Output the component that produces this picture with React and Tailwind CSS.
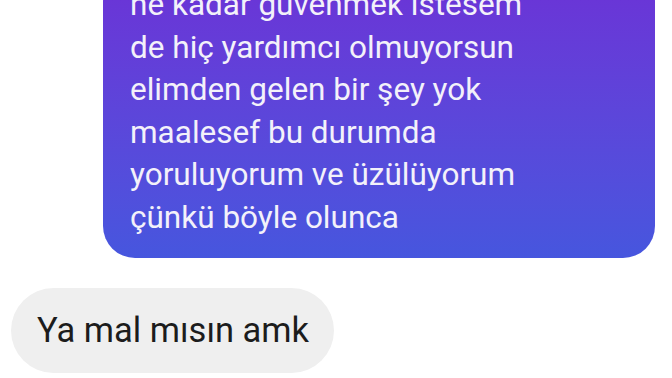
import React from 'react';

const lines = [
  'ne kadar güvenmek istesem',
  'de hiç yardımcı olmuyorsun',
  'elimden gelen bir şey yok',
  'maalesef bu durumda',
  'yoruluyorum ve üzülüyorum',
  'çünkü böyle olunca',
];

const App = () => {
  return (
    <div
      className="w-[672px] h-[378px] overflow-hidden bg-white flex flex-col"
      style={{ fontFamily: 'Roboto, "Noto Sans", sans-serif' }}
    >
      {/* outgoing message, cut off at the top */}
      <div className="mt-[-30px] ml-[103px] w-[552px] rounded-[32px] bg-linear-to-b from-[#6c31d6] to-[#4656de] pt-[14px] pb-[19px] pl-[27px] text-[#f3f1fa] text-[31.5px] leading-[42.5px]">
        {lines.map((line) => (
          <div key={line}>{line}</div>
        ))}
      </div>

      {/* incoming message */}
      <div className="mt-[30px] ml-[11px] w-[323px] h-[85px] rounded-full bg-[#efefef] flex items-center pl-[26px] text-[#1c1c1c] text-[34.5px]">
        Ya mal mısın amk
      </div>
    </div>
  );
};

export default App;
